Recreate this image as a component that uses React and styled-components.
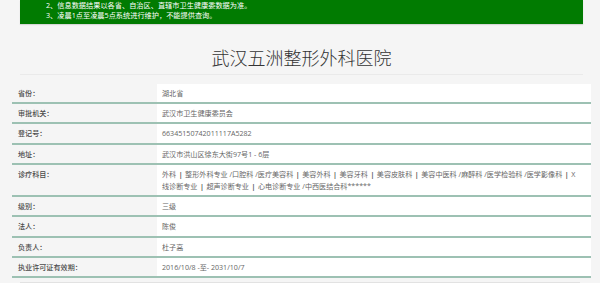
import React from "react";
import styled, { createGlobalStyle } from "styled-components";

const Global = createGlobalStyle`
  html, body { margin: 0; padding: 0; background: #f5f5f5; }
  body { font-family: "Open Sans", "Noto Sans CJK SC", sans-serif; overflow: hidden; }
`;

const Page = styled.div`
  width: 600px;
  height: 283px;
  overflow: hidden;
  background: #f5f5f5;
`;

const Inner = styled.div`
  margin: 0 17px 0 20px;
`;

const Banner = styled.div`
  background: #017b01;
  color: #fff;
  font-size: 7.2px;
  line-height: 10px;
  padding: 0 0 4px 26px;
  box-shadow: 0 1px 1px rgba(0, 0, 0, 0.12);
`;

const BannerLine = styled.div``;

const Title = styled.h1`
  margin: 21px 0 0;
  padding-bottom: 5px;
  border-bottom: 1px solid #eaeaea;
  font-size: 18px;
  line-height: 24px;
  font-weight: 300;
  color: #333;
  text-align: center;
  font-family: "Noto Sans CJK SC", sans-serif;
`;

const Table = styled.div`
  margin: 9px 9px 0 12px;
`;

const Row = styled.div`
  display: grid;
  grid-template-columns: 145px 1fr;
  border-bottom: 2px solid #9dc1b3;
  font-size: 7.1px;
  line-height: 12.2px;
`;

const Label = styled.div`
  padding: 3px 6px;
  color: #4a4a4a;
  font-weight: 500;
`;

const Value = styled.div`
  padding: 3px 14px 3px 5px;
  background: #fff;
  color: #666;
`;

const Bar = styled.span`
  font-weight: 700;
  color: #555;
  margin: 0 2.5px;
`;

const Foot = styled.div`
  margin: 4px 3px 0 0;
  border-top: 1px solid #e2e2e2;
  height: 4px;
`;

const Dept = () => (
  <>
    外科<Bar>|</Bar>整形外科专业 /口腔科 /医疗美容科<Bar>|</Bar>美容外科<Bar>|</Bar>美容牙科<Bar>|</Bar>美容皮肤科<Bar>|</Bar>美容中医科 /麻醉科 /医学检验科 /医学影像科<Bar>|</Bar>X线诊断专业<Bar>|</Bar>超声诊断专业<Bar>|</Bar>心电诊断专业 /中西医结合科******
  </>
);

const rows = [
  ["省份：", "湖北省"],
  ["审批机关：", "武汉市卫生健康委员会"],
  ["登记号：", "66345150742011117A5282"],
  ["地址：", "武汉市洪山区徐东大街97号1 - 6层"],
  ["诊疗科目：", <Dept />],
  ["级别：", "三级"],
  ["法人：", "陈俊"],
  ["负责人：", "杜子高"],
  ["执业许可证有效期：", "2016/10/8 -至- 2031/10/7"],
];

export default function App() {
  return (
    <Page>
      <Global />
      <Inner>
        <Banner>
          <BannerLine>2、信息数据结果以各省、自治区、直辖市卫生健康委数据为准。</BannerLine>
          <BannerLine>3、凌晨1点至凌晨5点系统进行维护，不能提供查询。</BannerLine>
        </Banner>
        <Title>武汉五洲整形外科医院</Title>
      </Inner>
      <Table>
        {rows.map(([k, v], i) => (
          <Row key={i}>
            <Label>{k}</Label>
            <Value>{v}</Value>
          </Row>
        ))}
      </Table>
      <Inner>
        <Foot />
      </Inner>
    </Page>
  );
}
